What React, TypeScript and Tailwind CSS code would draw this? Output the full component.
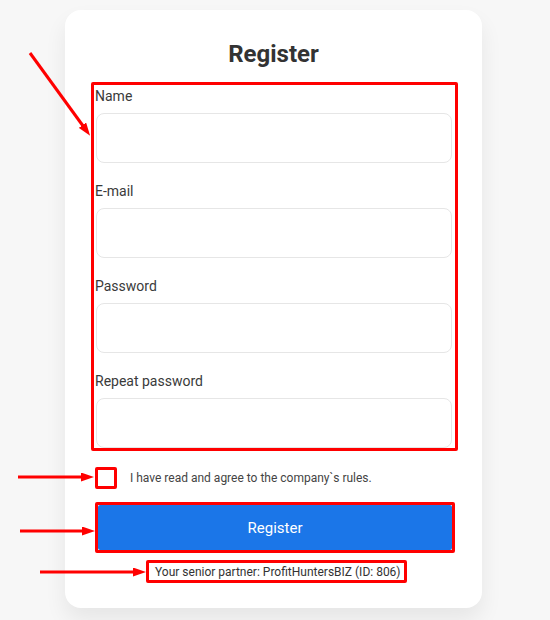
import React from 'react';

const fields = ['Name', 'E-mail', 'Password', 'Repeat password'];

function Arrows() {
  return (
    <svg className="pointer-events-none absolute left-0 top-0" width={550} height={620}>
      <defs>
        <marker id="head" markerWidth="13" markerHeight="9" refX="6" refY="4.5" orient="auto" markerUnits="userSpaceOnUse">
          <path d="M0,0 L13,4.5 L0,9 Z" fill="#ff0000" />
        </marker>
      </defs>
      <g stroke="#ff0000" strokeWidth={3} fill="none">
        <line x1={30} y1={53} x2={86} y2={130} markerEnd="url(#head)" />
        <line x1={18} y1={477} x2={87} y2={477} markerEnd="url(#head)" />
        <line x1={20} y1={531} x2={88} y2={531} markerEnd="url(#head)" />
        <line x1={40} y1={572} x2={139} y2={572} markerEnd="url(#head)" />
      </g>
    </svg>
  );
}

export default function App() {
  return (
    <div className="relative h-[620px] w-[550px] overflow-hidden bg-[#f7f7f7] pl-[65px] pt-[10px] font-['Roboto',sans-serif]">
      <div className="w-[417px] rounded-[16px] bg-white px-[26px] pt-[30px] pb-[25px] shadow-[0_12px_22px_rgba(0,0,0,0.07)]">
        <h1 className="text-center text-[24px] font-bold leading-[28px] text-[#333]">Register</h1>

        <div className="-mr-[2px] mt-[14px] flex flex-col gap-[18px] rounded-[2px] border-[3px] border-[#ff0000] pl-[1px] pr-[3px] pt-[1px]">
          {fields.map((f) => (
            <div key={f} className="flex flex-col gap-[7px]">
              <label className="text-[14px] leading-[20px] text-[#3a3a3a]">{f}</label>
              <div className="ml-[1px] h-[50px] rounded-[8px] border border-[#e6e6e6] bg-white" />
            </div>
          ))}
        </div>

        <div className="mt-[16px] flex items-center pl-[4px]">
          <div className="h-[22px] w-[22px] rounded-[2px] border-[3px] border-[#ff0000] bg-white" />
          <span className="ml-[13px] text-[12px] leading-[16px] text-[#444]">
            I have read and agree to the company`s rules.
          </span>
        </div>

        <div className="ml-[4px] mt-[13px] w-[360px] rounded-[2px] border-[3px] border-[#ff0000] bg-white">
          <button className="flex h-[45px] w-full items-center justify-center rounded-[2px] bg-[#1b76e8] pt-[2px] text-[15px] text-white">
            Register
          </button>
        </div>

        <div className="ml-[55px] mt-[7px] flex h-[23px] w-[261px] items-center rounded-[2px] border-[3px] border-[#ff0000] pl-[6px]">
          <span className="whitespace-nowrap text-[12px] text-[#333]">Your senior partner: ProfitHuntersBIZ (ID: 806)</span>
        </div>
      </div>
      <Arrows />
    </div>
  );
}
